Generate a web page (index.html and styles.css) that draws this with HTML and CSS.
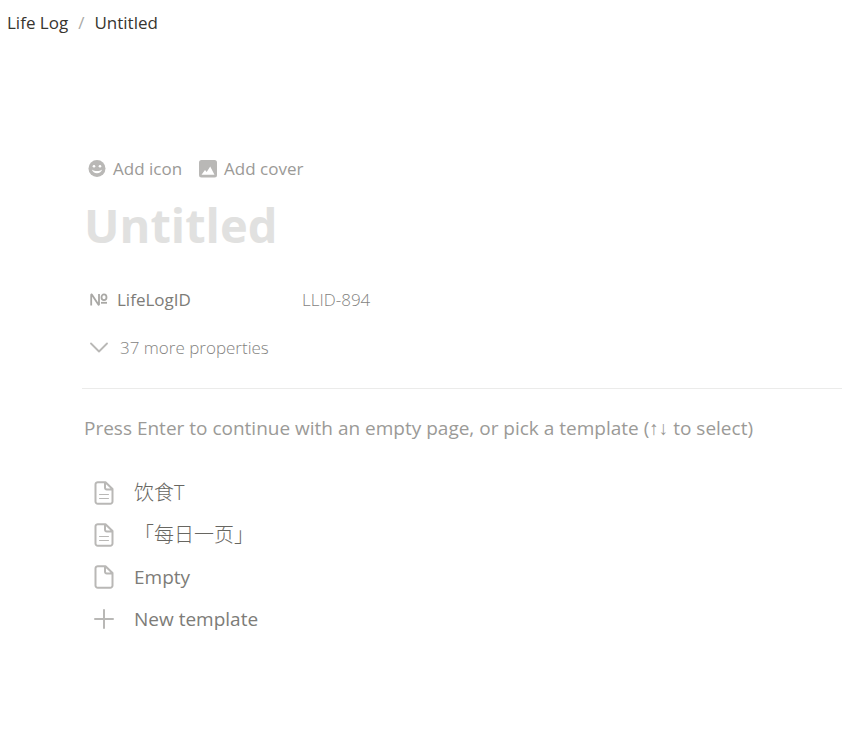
FILE: index.html
```html
<!DOCTYPE html>
<html lang="en">
<head>
<meta charset="utf-8">
<title>Untitled</title>
<link rel="stylesheet" href="styles.css">
</head>
<body>
<nav class="breadcrumb" aria-label="Breadcrumb">
  <a href="#">Life Log</a><span class="slash">/</span><a href="#">Untitled</a>
</nav>
<main class="page">
  <div class="actions">
    <button type="button" class="action">
      <svg class="icon" viewBox="0 0 18 18" aria-hidden="true"><circle cx="9" cy="8.500" r="8.500" fill="currentColor"/><circle cx="6" cy="6.300" r="1.300" fill="#fff"/><circle cx="12" cy="6.300" r="1.300" fill="#fff"/><path d="M3.800 9.500c.7 2.400 2.700 3.700 5.200 3.700s4.500-1.300 5.200-3.700c-1.500 1-3.400 1.500-5.200 1.500s-3.700-.5-5.200-1.500z" fill="#fff"/></svg>
      <span>Add icon</span>
    </button>
    <button type="button" class="action">
      <svg class="icon" viewBox="0 0 18 18" aria-hidden="true"><rect width="18" height="17.500" rx="2.500" fill="currentColor"/><path d="M2.500 14.800l3.500-4.700 1.700 2L11.200 6.500l4.300 8.300z" fill="#fff"/></svg>
      <span>Add cover</span>
    </button>
  </div>
  <h1 class="title">Untitled</h1>
  <dl class="property">
    <dt>
      <svg class="icon" viewBox="0 0 18 18" aria-hidden="true" fill="none" stroke="currentColor" stroke-width="1.800" stroke-linejoin="bevel"><path d="M1.200 14.500V3.500h.6l6.700 10.300h.5V3"/><ellipse cx="14" cy="6.300" rx="2.500" ry="2.900"/><path d="M11 11.800h6"/></svg>
      <span>LifeLogID</span>
    </dt>
    <dd>LLID-894</dd>
  </dl>
  <button type="button" class="more">
    <svg class="icon" viewBox="0 0 18 18" aria-hidden="true" fill="none" stroke="currentColor" stroke-width="1.800" stroke-linecap="round" stroke-linejoin="round"><path d="M1 4.500l8 8 8-8"/></svg>
    <span>37 more properties</span>
  </button>
  <hr class="rule">
  <p class="hint">Press Enter to continue with an empty page, or pick a template (<span class="arrows">↑↓</span> to select)</p>
  <ul class="templates">
    <li><button type="button" class="template">
      <svg class="sheet" viewBox="0 0 20 24" aria-hidden="true"><path d="M4 1.200h7.500L18.500 8v12.500a2.300 2.300 0 0 1-2.300 2.300H3.800a2.300 2.300 0 0 1-2.300-2.300V3.500A2.300 2.300 0 0 1 4 1.200zM11 1.500v5.300a1.700 1.700 0 0 0 1.700 1.700h5.500"/><path class="line" d="M5.500 13.500h9M5.500 17.500h9"/></svg>
      <span class="zh" lang="zh">饮食T</span>
    </button></li>
    <li><button type="button" class="template">
      <svg class="sheet" viewBox="0 0 20 24" aria-hidden="true"><path d="M4 1.200h7.500L18.500 8v12.500a2.300 2.300 0 0 1-2.300 2.300H3.800a2.300 2.300 0 0 1-2.300-2.300V3.500A2.300 2.300 0 0 1 4 1.200zM11 1.500v5.300a1.700 1.700 0 0 0 1.700 1.700h5.500"/><path class="line" d="M5.500 13.500h9M5.500 17.500h9"/></svg>
      <span class="zh" lang="zh">「每日一页」</span>
    </button></li>
    <li><button type="button" class="template">
      <svg class="sheet" viewBox="0 0 20 24" aria-hidden="true"><path d="M4 1.200h7.500L18.500 8v12.500a2.300 2.300 0 0 1-2.300 2.300H3.800a2.300 2.300 0 0 1-2.300-2.300V3.500A2.300 2.300 0 0 1 4 1.200zM11 1.500v5.300a1.700 1.700 0 0 0 1.700 1.700h5.500"/></svg>
      <span>Empty</span>
    </button></li>
    <li><button type="button" class="template">
      <svg class="sheet" viewBox="0 0 20 24" aria-hidden="true"><path d="M10 3v18M1 12h18"/></svg>
      <span>New template</span>
    </button></li>
  </ul>
</main>
</body>
</html>
```

FILE: styles.css
```css
* { box-sizing: border-box; }

body {
  margin: 0;
  background: #fff;
  color: #37352f;
  font: 400 17px/24px "Open Sans", "Noto Sans CJK SC", sans-serif;
}

button {
  display: flex;
  align-items: center;
  padding: 0;
  border: 0;
  background: none;
  font: inherit;
  color: inherit;
  cursor: pointer;
}

.breadcrumb {
  display: flex;
  gap: 10px;
  padding: 11px 7px;
}
.breadcrumb a { color: inherit; text-decoration: none; }
.slash { color: #aaa9a6; }

.page { padding: 110px 0 24px 82px; }

.icon { flex: none; width: 18px; height: 18px; color: #b9b8b6; }

.actions { display: flex; gap: 17px; padding-left: 6px; color: #9b9a97; }
.action { gap: 7px; height: 26px; }

.title {
  margin: 5px 0 0;
  padding-left: 2px;
  font-size: 47px;
  line-height: 76px;
  font-weight: 700;
  color: #e1e1e0;
}

.property {
  display: grid;
  grid-template-columns: 212px 1fr;
  margin: 25px 0 0;
  padding-left: 8px;
}
.property dt { display: flex; align-items: center; gap: 9px; color: #7d7c78; }
.property dt .icon { color: #a9a8a5; }
.property dd { margin: 0; font-weight: 300; color: #84837f; }

.more { gap: 12px; margin: 24px 0 0 8px; font-weight: 300; color: #84837f; }

.rule { margin: 28px 0 0; border: 0; border-top: 1px solid #ebebea; }

.hint {
  margin: 27px 0 0;
  padding-left: 2px;
  font-size: 19px;
  color: #9b9a97;
}
.arrows { font-family: "Liberation Sans", sans-serif; }

.templates { margin: 31px 0 0; padding: 0 0 0 12px; list-style: none; font-size: 19px; }
.template { gap: 20px; width: 100%; height: 42px; color: #7d7c78; text-align: left; }
.zh { font-size: 20px; font-weight: 300; color: #676661; }
.sheet {
  flex: none;
  width: 20px;
  height: 24px;
  fill: none;
  stroke: #b9b8b6;
  stroke-width: 2;
  stroke-linecap: round;
  stroke-linejoin: round;
}
.line { stroke-width: 1; }
```
